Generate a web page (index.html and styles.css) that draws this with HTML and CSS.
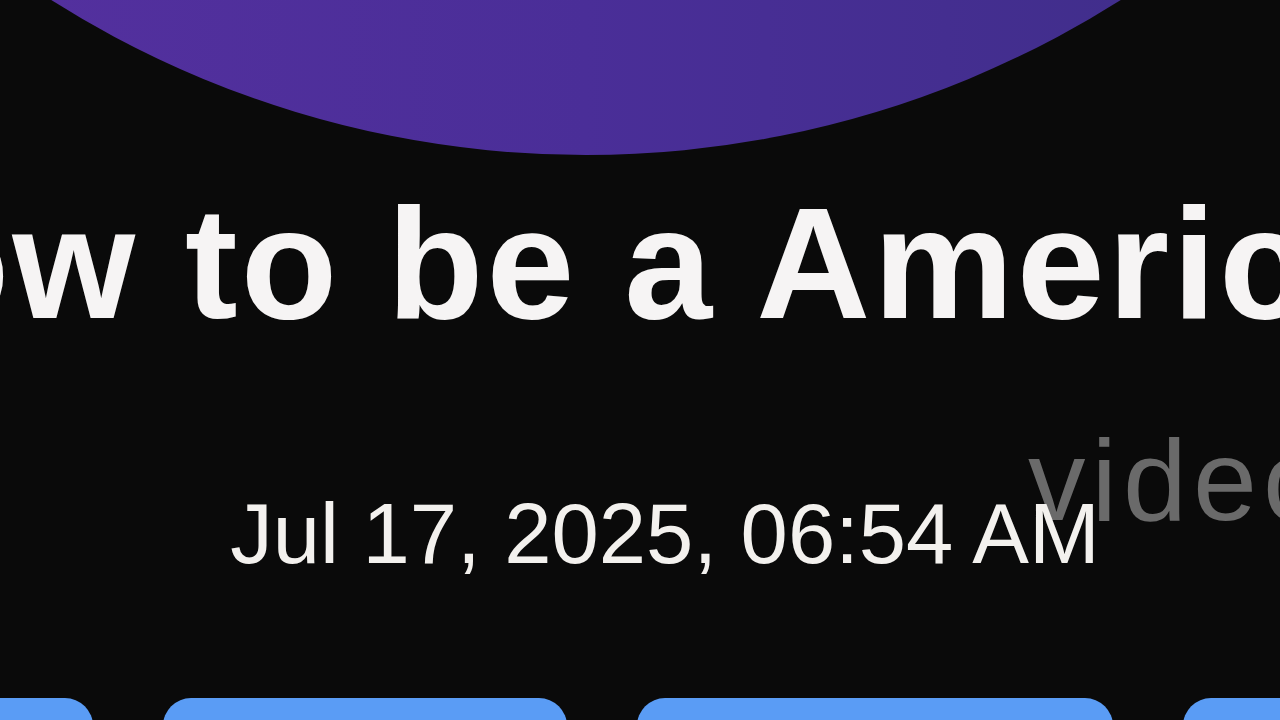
FILE: index.html
```html
<!doctype html>
<html lang="en">
<head>
	<meta charset="UTF-8">
	<title>How to be a American</title>
<!--样式-->
	<link rel="stylesheet" href="styles.css">
</head>
<body>
<div class="page">
	<!--头像-->
	<div class="hero">
		<div class="avatar"></div>
	</div>
	<!--标题-->
	<h1 class="title">How to be a American</h1>
	<p class="date">Jul 17, 2025, 06:54 AM</p>
	<!--按钮-->
	<div class="actions">
		<button class="btn btn_a">Like</button>
		<button class="btn btn_b">Comment</button>
		<button class="btn btn_c">Share</button>
		<button class="btn btn_d">Save</button>
	</div>
	<span class="mark">video</span>
</div>
</body>
</html>
```

FILE: styles.css
```css
	*{margin:0;padding:0;box-sizing:border-box}
	html,body{
		width:1280px;
		height:720px;
		overflow:hidden;
		background:#0a0a0a;
	}
	.page{
		position:relative;
		width:1280px;
		height:720px;
		font-family:"Liberation Sans",Arial,sans-serif;
	}
	.hero{
		display:flex;
		justify-content:center;
		padding-right:108px;
	}
	div.avatar{
		flex-shrink:0;
		width:2000px;
		height:2000px;
		margin-top:-1845px;
		border-radius:50%;
		background:linear-gradient(to right,#53309e 23%,#4a2e98 50%,#412e8c 77%);
	}
	.title{
		display:flex;
		justify-content:center;
		white-space:nowrap;
		margin-top:29px;
		padding-left:16px;
		font-size:158px;
		line-height:1;
		font-weight:700;
		letter-spacing:3px;
		color:#f6f4f4;
	}
	.date{
		position:relative;
		z-index:1;
		display:flex;
		justify-content:center;
		white-space:nowrap;
		margin-top:149px;
		padding-left:50px;
		font-size:85px;
		line-height:1;
		color:#f3f1ee;
	}
	.actions{
		display:flex;
		justify-content:center;
		gap:70px;
		margin-top:122px;
	}
	button.btn{
		flex-shrink:0;
		height:90px;
		border:0;
		outline:0;
		border-radius:28px;
		background:#5a9cf5;
		color:#fff;
		font-family:inherit;
		font-size:40px;
		padding-top:60px;
	}
	.btn_a{width:400px}
	.btn_b{width:404px}
	.btn_c{width:476px}
	.btn_d{width:404px}
	/*水印*/
	.mark{
		position:absolute;
		left:1028px;
		top:423px;
		font-size:115px;
		line-height:1;
		letter-spacing:6px;
		color:#6a6a6a;
		white-space:nowrap;
	}
```
